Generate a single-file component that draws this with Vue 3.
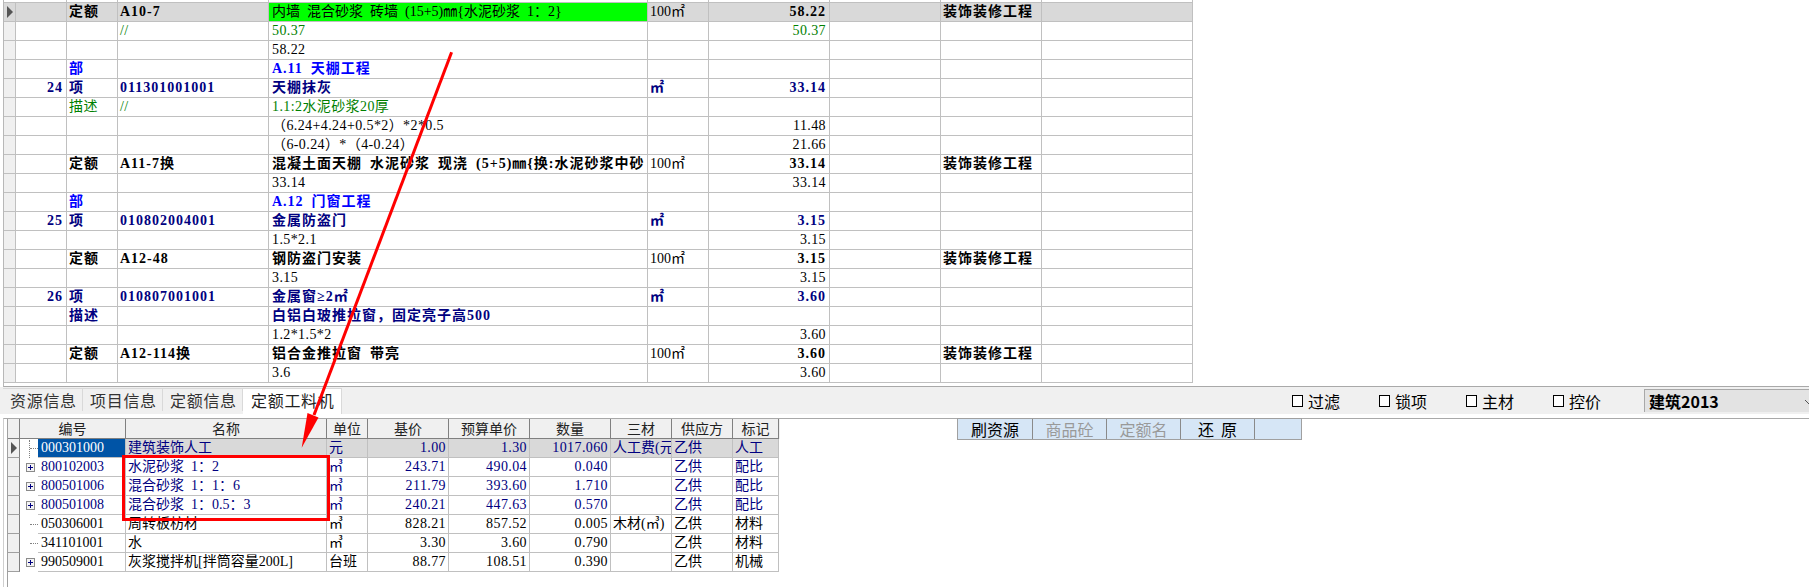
<script setup>
const upperRows = [
  { kind: "quota", type: "定额", code: "A10-7", name: "内墙 混合砂浆 砖墙 (15+5)㎜{水泥砂浆 1：2}", unit: "100㎡", qty: "58.22", major: "装饰装修工程", current: true },
  { kind: "green", code: "//", name: "50.37", qty: "50.37" },
  { kind: "plain", name: "58.22" },
  { kind: "part", type: "部", name: "A.11 天棚工程" },
  { kind: "item", no: "24", type: "项", code: "011301001001", name: "天棚抹灰", unit: "㎡", qty: "33.14" },
  { kind: "green", type: "描述", code: "//", name: "1.1:2水泥砂浆20厚" },
  { kind: "plain", name: "（6.24+4.24+0.5*2）*2*0.5", qty: "11.48" },
  { kind: "plain", name: "（6-0.24）*（4-0.24）", qty: "21.66" },
  { kind: "quota", type: "定额", code: "A11-7换", name: "混凝土面天棚 水泥砂浆 现浇 (5+5)㎜{换:水泥砂浆中砂", unit: "100㎡", qty: "33.14", major: "装饰装修工程" },
  { kind: "plain", name: "33.14", qty: "33.14" },
  { kind: "part", type: "部", name: "A.12 门窗工程" },
  { kind: "item", no: "25", type: "项", code: "010802004001", name: "金属防盗门", unit: "㎡", qty: "3.15" },
  { kind: "plain", name: "1.5*2.1", qty: "3.15" },
  { kind: "quota", type: "定额", code: "A12-48", name: "钢防盗门安装", unit: "100㎡", qty: "3.15", major: "装饰装修工程" },
  { kind: "plain", name: "3.15", qty: "3.15" },
  { kind: "item", no: "26", type: "项", code: "010807001001", name: "金属窗≥2㎡", unit: "㎡", qty: "3.60" },
  { kind: "item", type: "描述", name: "白铝白玻推拉窗，固定亮子高500" },
  { kind: "plain", name: "1.2*1.5*2", qty: "3.60" },
  { kind: "quota", type: "定额", code: "A12-114换", name: "铝合金推拉窗 带亮", unit: "100㎡", qty: "3.60", major: "装饰装修工程" },
  { kind: "plain", name: "3.6", qty: "3.60" },
];

const tabs = ["资源信息", "项目信息", "定额信息", "定额工料机"];
const options = ["过滤", "锁项", "主材", "控价"];

const headers = ["名称", "单位", "基价", "预算单价", "数量", "三材", "供应方", "标记"];

const materials = [
  { code: "000301000", name: "建筑装饰人工", unit: "元", base: "1.00", budget: "1.30", qty: "1017.060", sancai: "人工费(元)", mark: "人工", tone: "navy", current: true },
  { code: "800102003", name: "水泥砂浆 1：2", unit: "㎥", base: "243.71", budget: "490.04", qty: "0.040", mark: "配比", tone: "navy", plus: true },
  { code: "800501006", name: "混合砂浆 1：1：6", unit: "㎥", base: "211.79", budget: "393.60", qty: "1.710", mark: "配比", tone: "navy", plus: true },
  { code: "800501008", name: "混合砂浆 1：0.5：3", unit: "㎥", base: "240.21", budget: "447.63", qty: "0.570", mark: "配比", tone: "navy", plus: true },
  { code: "050306001", name: "周转板枋材", unit: "㎥", base: "828.21", budget: "857.52", qty: "0.005", sancai: "木材(㎥)", mark: "材料" },
  { code: "341101001", name: "水", unit: "㎥", base: "3.30", budget: "3.60", qty: "0.790", mark: "材料" },
  { code: "990509001", name: "灰浆搅拌机[拌筒容量200L]", unit: "台班", base: "88.77", budget: "108.51", qty: "0.390", mark: "机械", plus: true },
];

const actions = [
  { label: "刷资源" },
  { label: "商品砼", off: true },
  { label: "定额名", off: true },
  { label: "还  原" },
  { label: "" },
];
</script>

<template>
  <div class="page">
    <!-- 上方清单表 -->
    <section class="upper">
      <div class="u-row u-stub">
        <span v-for="n in 9" :key="n" class="u-cell"></span>
      </div>
      <div
        v-for="(row, i) in upperRows"
        :key="i"
        class="u-row"
        :class="[row.kind, { current: row.current }]"
      >
        <span class="u-cell u-ind">
          <i v-if="row.current" class="pointer"></i>
        </span>
        <span class="u-cell right">{{ row.no }}</span>
        <span class="u-cell">{{ row.type }}</span>
        <span class="u-cell">{{ row.code }}</span>
        <span class="u-cell u-name">{{ row.name }}</span>
        <span class="u-cell u-unit">{{ row.unit }}</span>
        <span class="u-cell right">{{ row.qty }}</span>
        <span class="u-cell"></span>
        <span class="u-cell">{{ row.major }}</span>
        <span class="u-cell"></span>
      </div>
    </section>

    <!-- 页签 -->
    <div class="strip">
      <div class="tabs">
        <span
          v-for="(tab, i) in tabs"
          :key="tab"
          class="tab"
          :class="{ active: i === 3 }"
        >{{ tab }}</span>
      </div>
      <div class="options">
        <label v-for="opt in options" :key="opt" class="option">
          <i class="box"></i>{{ opt }}
        </label>
      </div>
      <div class="select">
        <span>建筑2013</span>
        <svg class="chevron" width="8" height="6" viewBox="0 0 8 6">
          <path d="M0 1 L4 5 L8 1" fill="none" stroke="#555" stroke-width="1" />
        </svg>
      </div>
    </div>

    <!-- 工料机 -->
    <div class="pane">
      <div class="lower">
        <div class="l-row l-head">
          <span class="l-cell l-ind"></span>
          <span class="l-cell l-code-head">编号</span>
          <span v-for="h in headers" :key="h" class="l-cell">{{ h }}</span>
        </div>
        <div
          v-for="(m, i) in materials"
          :key="m.code"
          class="l-row l-body"
          :class="[m.tone, { current: m.current }]"
        >
          <span class="l-cell l-ind">
            <i v-if="m.current" class="pointer"></i>
          </span>
          <span class="l-tree">
            <svg v-if="m.plus" class="plus" width="9" height="9" viewBox="0 0 9 9">
              <rect x="0.5" y="0.5" width="8" height="8" fill="#f4f4f4" stroke="#8a8a8a" />
              <path d="M2 4.5 H7 M4.5 2 V7" stroke="#000080" stroke-width="1" />
            </svg>
            <i v-else class="twig" :class="{ tall: i === 0 }"></i>
          </span>
          <span class="l-cell l-code">{{ m.code }}</span>
          <span class="l-cell">{{ m.name }}</span>
          <span class="l-cell">{{ m.unit }}</span>
          <span class="l-cell right">{{ m.base }}</span>
          <span class="l-cell right">{{ m.budget }}</span>
          <span class="l-cell right">{{ m.qty }}</span>
          <span class="l-cell">{{ m.sancai }}</span>
          <span class="l-cell">乙供</span>
          <span class="l-cell">{{ m.mark }}</span>
        </div>
      </div>

      <div class="actions">
        <span
          v-for="(a, i) in actions"
          :key="i"
          class="action"
          :class="{ off: a.off }"
        >{{ a.label }}</span>
      </div>
    </div>

    <!-- 标注 -->
    <div class="red-box"></div>
    <svg class="arrow" width="1809" height="587" viewBox="0 0 1809 587">
      <path d="M451.6 52.3 L314 415" stroke="#ff0000" stroke-width="3" fill="none" />
      <path d="M301.7 447.7 L307.5 413 L318.5 417.5 Z" fill="#ff0000" />
    </svg>
  </div>
</template>

<style scoped>
.page {
  position: relative;
  width: 1809px;
  height: 587px;
  overflow: hidden;
  background: #fff;
  color: #000;
  font-family: "Liberation Serif", "Noto Sans CJK SC", serif;
  font-size: 14px;
  word-spacing: 3.5px;
}

.upper {
  height: 387px;
  margin-left: 3px;
  border-left: 1px solid #b8b8b8;
  box-sizing: border-box;
  border-bottom: 1px solid #a9a9a9;
}

.u-row {
  display: grid;
  grid-template-columns: 12px 51px 51px 151px 379px 61px 121px 111px 101px 151px;
  width: 1189px;
  height: 19px;
  line-height: 18px;
}

.u-stub {
  height: 3px;
  grid-template-columns: 63px 51px 151px 379px 61px 121px 111px 101px 151px;
}

.u-cell {
  box-sizing: border-box;
  padding: 0 2px;
  border-right: 1px solid #c0c0c0;
  border-bottom: 1px solid #c0c0c0;
  white-space: nowrap;
  overflow: hidden;
}

.u-ind {
  position: relative;
  background: #f0f0f0;
  padding: 0;
}

.u-name {
  padding-left: 3px;
}

.right {
  text-align: right;
  padding-right: 3px;
  letter-spacing: 0.4px;
}

.plain .u-cell,
.green .u-cell {
  letter-spacing: 0.4px;
}

.quota .u-cell,
.part .u-cell,
.item .u-cell {
  font-weight: 700;
  letter-spacing: 1px;
}

.quota .u-unit {
  font-weight: 400;
  letter-spacing: 0;
}

.current .u-cell {
  background: #d9d9d9;
}

.u-row.current .u-name {
  background: #00ff00;
  color: #000;
  font-weight: 400;
  letter-spacing: 0;
}

.part {
  color: #0000ff;
}

.item {
  color: #000080;
}

.green {
  color: #008000;
}

.pointer {
  position: absolute;
  left: 3px;
  top: 3px;
  width: 0;
  height: 0;
  border-left: 6px solid #555;
  border-top: 6px solid transparent;
  border-bottom: 6px solid transparent;
}

.strip {
  display: flex;
  height: 28px;
  padding-left: 3px;
  background: #f0f0f0;
  align-items: flex-end;
  border-bottom: 1px solid #fff;
  box-sizing: border-box;
}

.tabs {
  display: flex;
  width: 1270px;
}

.tab {
  box-sizing: border-box;
  width: 80px;
  height: 23px;
  line-height: 22px;
  padding-left: 7px;
  border: 1px solid #d9d9d9;
  border-bottom: 0;
  border-left: 0;
  font-family: "Noto Sans CJK SC", sans-serif;
  font-size: 16px;
  letter-spacing: 0.7px;
  color: #333;
}

.tab.active {
  width: 99px;
  height: 26px;
  line-height: 22px;
  background: #fff;
  color: #222;
  padding-left: 8px;
}

.options {
  display: flex;
  gap: 36px;
  height: 100%;
  align-items: center;
  width: 352px;
  font-family: "Noto Sans CJK SC", sans-serif;
  font-size: 16px;
  margin-left: 19px;
}

.option {
  display: flex;
  align-items: center;
  gap: 5px;
  width: 51px;
  white-space: nowrap;
}

.box {
  flex: none;
  width: 9px;
  height: 10px;
  border: 1px solid #000;
  background: #fff;
}

.select {
  position: relative;
  align-self: flex-start;
  box-sizing: border-box;
  margin-top: 2px;
  flex: 1;
  height: 23px;
  padding-left: 4px;
  line-height: 22px;
  background: #e3e3e3;
  border-left: 1px solid #a8a8a8;
  border-top: 1px solid #a8a8a8;
  font-family: "Noto Sans CJK SC", sans-serif;
  font-size: 16px;
  font-weight: 700;
}

.chevron {
  position: absolute;
  right: -4px;
  top: 9px;
}

.pane {
  display: flex;
  height: 172px;
  margin: 3px 0 0 3px;
  border-left: 1px solid #cfcfcf;
  border-top: 1px solid #a9a9a9;
}

.lower {
  width: 772px;
  margin-left: 3px;
  border-left: 1px solid #a0a0a0;
}

.l-row {
  display: grid;
  grid-template-columns: 12px 18px 88px 201px 41px 81px 81px 81px 61px 61px 46px;
  height: 19px;
  line-height: 18px;
}

.l-head {
  grid-template-columns: 12px 106px 201px 41px 81px 81px 81px 61px 61px 46px;
  height: 20px;
  line-height: 19px;
  background: #f0f0f0;
  color: #222;
  text-align: center;
  font-family: "Noto Sans CJK SC", sans-serif;
}

.l-cell {
  position: relative;
  box-sizing: border-box;
  padding: 0 2px;
  border-right: 1px solid #c0c0c0;
  border-bottom: 1px solid #c0c0c0;
  white-space: nowrap;
  overflow: hidden;
}

.l-head .l-cell {
  border-color: #808080;
}

.l-ind {
  background: #f0f0f0;
  padding: 0;
  border-right-color: #808080;
  border-bottom-color: #a0a0a0;
}

.l-code {
  padding-left: 3px;
}

.l-tree {
  display: flex;
  align-items: center;
  padding-left: 6px;
  box-sizing: border-box;
}

.plus {
  flex: none;
  margin-bottom: 1px;
}

.twig {
  display: block;
  position: relative;
  width: 8px;
  margin-left: 4px;
  border-top: 1px dotted #808080;
  margin-bottom: 1px;
}

.twig.tall::before {
  content: "";
  position: absolute;
  left: -1px;
  top: -9px;
  height: 18px;
  border-left: 1px dotted #808080;
}

.navy {
  color: #000080;
}

.l-body.current .l-cell:not(.l-ind) {
  background: #d9d9d9;
}

.l-body.current .l-code.l-code {
  background: #0054a6;
  color: #fff;
}

.actions {
  display: flex;
  height: 22px;
  margin-left: 177px;
  margin-top: -1px;
  box-sizing: border-box;
  border: 1px solid #a0a0a0;
  background: #d6e6f6;
  font-family: "Noto Sans CJK SC", sans-serif;
  font-size: 16px;
  word-spacing: 0;
  line-height: 20px;
}

.action {
  box-sizing: border-box;
  width: 74px;
  text-align: center;
  border-right: 1px solid #8a8a8a;
  white-space: pre;
}

.action:first-child {
  width: 75px;
}

.action:last-child {
  width: 46px;
  border-right: 0;
}

.action.off {
  color: #999;
}

.red-box {
  position: absolute;
  left: 122px;
  top: 455px;
  width: 202px;
  height: 60px;
  border: 3px solid #ff0000;
}

.arrow {
  position: absolute;
  left: 0;
  top: 0;
  pointer-events: none;
}
</style>
